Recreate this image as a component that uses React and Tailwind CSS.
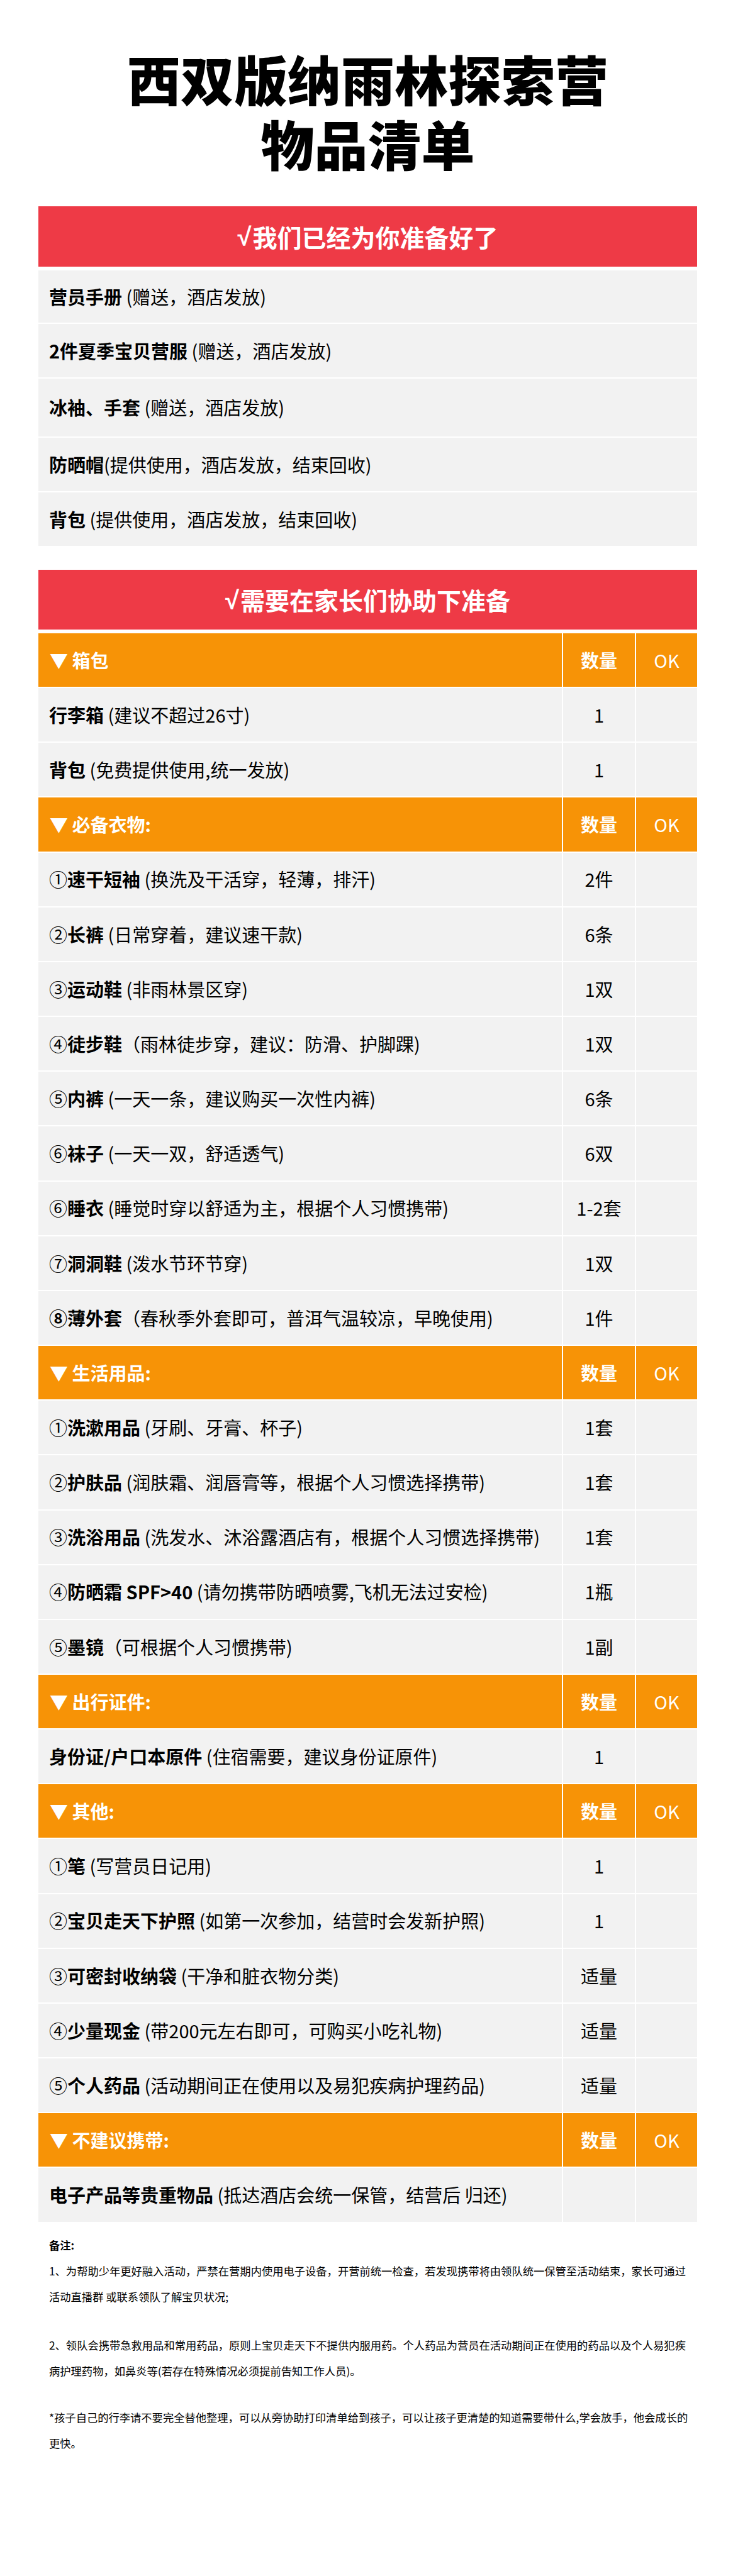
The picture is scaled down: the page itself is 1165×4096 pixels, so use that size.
import React from 'react';

const prepared = [
  { b: '营员手册', n: ' (赠送，酒店发放)', h: 'h-[83px]' },
  { b: '2件夏季宝贝营服', n: ' (赠送，酒店发放)', h: 'h-[85px]' },
  { b: '冰袖、手套', n: ' (赠送，酒店发放)', h: 'h-[92px]' },
  { b: '防晒帽', n: '(提供使用，酒店发放，结束回收)', h: 'h-[85px]' },
  { b: '背包', n: ' (提供使用，酒店发放，结束回收)', h: 'h-[85px]' },
];

const sections = [
  {
    title: '箱包',
    rows: [
      { p: '', b: '行李箱', n: ' (建议不超过26寸)', q: '1' },
      { p: '', b: '背包', n: ' (免费提供使用,统一发放)', q: '1' },
    ],
  },
  {
    title: '必备衣物:',
    rows: [
      { p: '①', b: '速干短袖', n: ' (换洗及干活穿，轻薄，排汗)', q: '2件' },
      { p: '②', b: '长裤', n: ' (日常穿着，建议速干款)', q: '6条' },
      { p: '③', b: '运动鞋', n: ' (非雨林景区穿)', q: '1双' },
      { p: '④', b: '徒步鞋', n: '（雨林徒步穿，建议：防滑、护脚踝)', q: '1双' },
      { p: '⑤', b: '内裤', n: ' (一天一条，建议购买一次性内裤)', q: '6条' },
      { p: '⑥', b: '袜子', n: ' (一天一双，舒适透气)', q: '6双' },
      { p: '⑥', b: '睡衣', n: ' (睡觉时穿以舒适为主，根据个人习惯携带)', q: '1-2套' },
      { p: '⑦', b: '洞洞鞋', n: ' (泼水节环节穿)', q: '1双' },
      { p: '', b: '⑧薄外套', n: '（春秋季外套即可，普洱气温较凉，早晚使用)', q: '1件' },
    ],
  },
  {
    title: '生活用品:',
    rows: [
      { p: '①', b: '洗漱用品', n: ' (牙刷、牙膏、杯子)', q: '1套' },
      { p: '②', b: '护肤品', n: ' (润肤霜、润唇膏等，根据个人习惯选择携带)', q: '1套' },
      { p: '③', b: '洗浴用品', n: ' (洗发水、沐浴露酒店有，根据个人习惯选择携带)', q: '1套' },
      { p: '④', b: '防晒霜 SPF>40', n: ' (请勿携带防晒喷雾,飞机无法过安检)', q: '1瓶' },
      { p: '⑤', b: '墨镜', n: '（可根据个人习惯携带)', q: '1副' },
    ],
  },
  {
    title: '出行证件:',
    rows: [{ p: '', b: '身份证/户口本原件', n: ' (住宿需要，建议身份证原件)', q: '1' }],
  },
  {
    title: '其他:',
    rows: [
      { p: '①', b: '笔', n: ' (写营员日记用)', q: '1' },
      { p: '②', b: '宝贝走天下护照', n: ' (如第一次参加，结营时会发新护照)', q: '1' },
      { p: '③', b: '可密封收纳袋', n: ' (干净和脏衣物分类)', q: '适量' },
      { p: '④', b: '少量现金', n: ' (带200元左右即可，可购买小吃礼物)', q: '适量' },
      { p: '⑤', b: '个人药品', n: ' (活动期间正在使用以及易犯疾病护理药品)', q: '适量' },
    ],
  },
  {
    title: '不建议携带:',
    rows: [{ p: '', b: '电子产品等贵重物品', n: ' (抵达酒店会统一保管，结营后 归还)', q: '' }],
  },
];

function HeaderRow({ title }) {
  return (
    <div className="flex h-[85.16px] gap-[2px] text-white text-[29px]">
      <div className="flex w-[832px] items-center bg-[#f79306] pl-[18px] font-bold whitespace-pre">
        {'▼ ' + title}
      </div>
      <div className="flex w-[114px] items-center justify-center bg-[#f79306] font-bold">数量</div>
      <div className="flex w-[97px] items-center justify-center bg-[#f79306]">OK</div>
    </div>
  );
}

function DataRow({ r }) {
  return (
    <div className="flex h-[85.16px] gap-[2px] text-black text-[29px]">
      <div className="flex w-[832px] items-center bg-[#f2f2f2] pl-[17px] whitespace-pre">
        <span>{r.p}</span>
        <span className="font-bold">{r.b}</span>
        <span>{r.n}</span>
      </div>
      <div className="flex w-[114px] items-center justify-center bg-[#f2f2f2]">{r.q}</div>
      <div className="w-[97px] bg-[#f2f2f2]"></div>
    </div>
  );
}

function RedHeader({ text, h, mt }) {
  return (
    <div className={`flex items-center justify-center bg-[#ee3a46] text-[39px] font-bold text-white ${h} ${mt}`}>
      <span className="mr-[2px] font-['Liberation_Sans',sans-serif] text-[40px] font-bold">√</span>
      <span>{text}</span>
    </div>
  );
}

export default function App() {
  return (
    <div className="min-h-[4096px] w-[1165px] bg-white font-['Noto_Sans_CJK_SC',sans-serif]">
      <div className="ml-[61px] w-[1047px] pt-[72px]">
        <h1 className="text-center text-[85px] font-black leading-[103px] text-black">
          <div>西双版纳雨林探索营</div>
          <div>物品清单</div>
        </h1>

        <RedHeader text="我们已经为你准备好了" h="h-[96px]" mt="mt-[50px]" />
        <div className="mt-[6px] flex flex-col gap-[2px]">
          {prepared.map((r, i) => (
            <div
              key={i}
              className={`flex items-center bg-[#f2f2f2] pl-[17px] text-[29px] text-black whitespace-pre ${r.h}`}
            >
              <span className="font-bold">{r.b}</span>
              <span>{r.n}</span>
            </div>
          ))}
        </div>

        <RedHeader text="需要在家长们协助下准备" h="h-[95px]" mt="mt-[38px]" />
        <div className="mt-[6px] flex flex-col gap-[2px]">
          {sections.map((s, si) => (
            <React.Fragment key={si}>
              <HeaderRow title={s.title} />
              {s.rows.map((r, ri) => (
                <DataRow key={ri} r={r} />
              ))}
            </React.Fragment>
          ))}
        </div>

        <div className="mt-[16px] pl-[17px] text-[17.3px] leading-[41px] text-black">
          <div className="font-bold">备注:</div>
          <div>1、为帮助少年更好融入活动，严禁在营期内使用电子设备，开营前统一检查，若发现携带将由领队统一保管至活动结束，家长可通过</div>
          <div>活动直播群 或联系领队了解宝贝状况;</div>
          <div className="mt-[36px] whitespace-nowrap">2、领队会携带急救用品和常用药品，原则上宝贝走天下不提供内服用药。个人药品为营员在活动期间正在使用的药品以及个人易犯疾</div>
          <div>病护理药物，如鼻炎等(若存在特殊情况必须提前告知工作人员)。</div>
          <div className="mt-[33px] whitespace-nowrap">*孩子自己的行李请不要完全替他整理，可以从旁协助打印清单给到孩子，可以让孩子更清楚的知道需要带什么,学会放手，他会成长的</div>
          <div>更快。</div>
        </div>
      </div>
    </div>
  );
}
